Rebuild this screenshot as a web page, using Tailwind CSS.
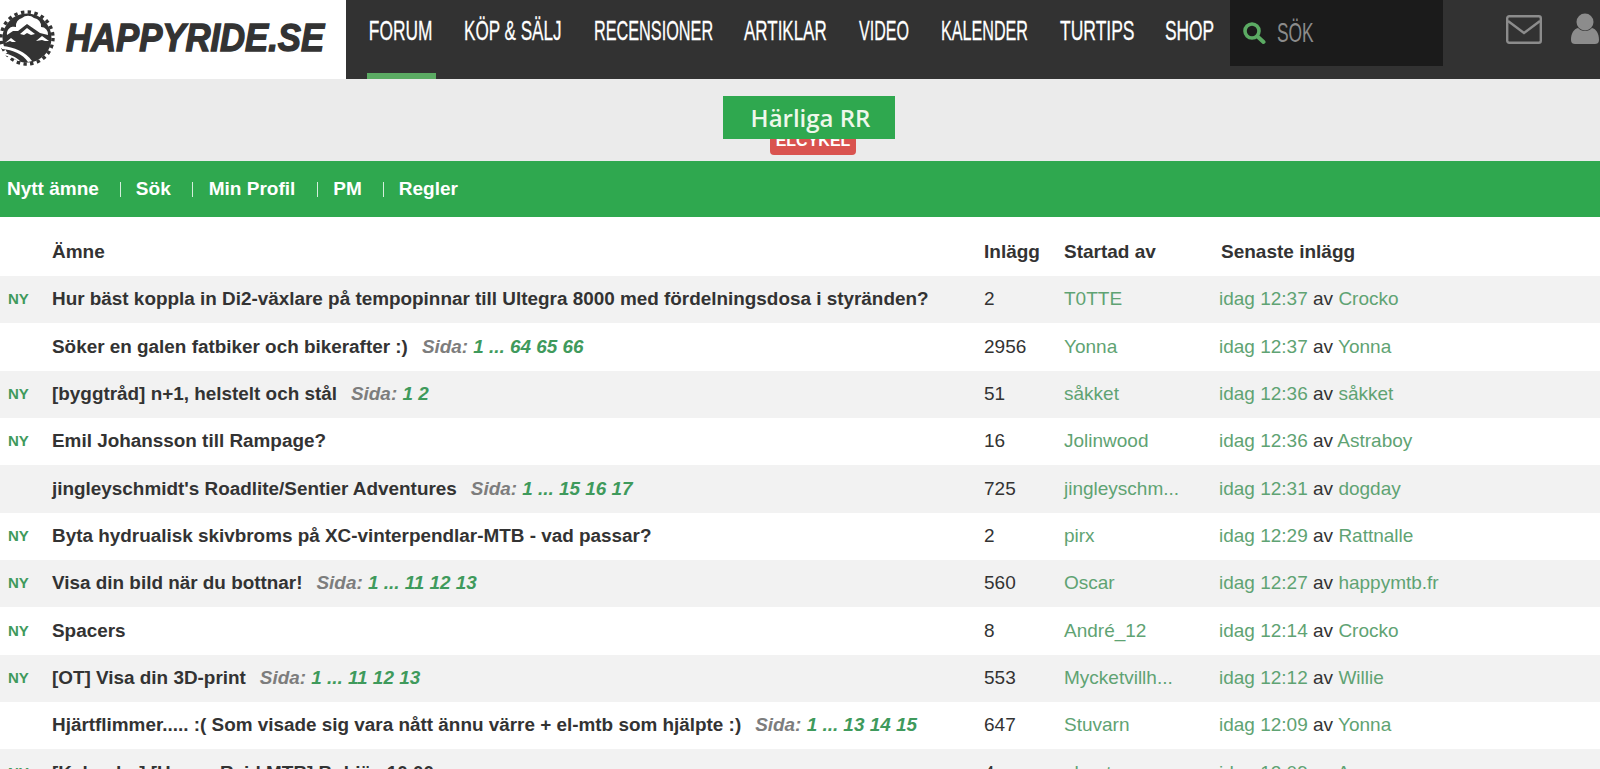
<!DOCTYPE html>
<html lang="sv">
  <head>
    <meta charset="UTF-8" />
    <title>Happyride.se Forum</title>
    <script src="https://cdn.jsdelivr.net/npm/@tailwindcss/browser@4"></script>
  </head>
  <body class="bg-white font-['Liberation_Sans',Arial,sans-serif] text-[#333] overflow-hidden h-[769px]">
    <!-- Header -->
    <header class="flex h-[79px] bg-[#323232]">
      <a href="#" class="flex items-center w-[346px] h-full bg-white pb-[3px] shrink-0">
        <svg class="w-[55px] h-[56px] shrink-0" viewBox="0 0 55 56">
          <circle cx="27" cy="28" r="24.5" fill="#333" />
          <circle cx="27" cy="28" r="26" fill="none" stroke="#333" stroke-width="3.4" stroke-dasharray="3.4 3.4" />
          <path d="M7 25a7 7 0 0 1 9-8 8 8 0 0 1 6-9 9 9 0 0 1 12 0 8 8 0 0 1 7 9 7 7 0 0 1 7 8l-8-2-13-9-9 7-5 0z" fill="#fff" />
          <path d="M20 24l7-6 8 6-4 1-4-2-3 2zM5 33l6-5 5 4-4 0-2-1zM36 31l6-5 7 5-4 0-3-1z" fill="#fff" />
          <path d="M2 36c12 1 24 6 30 15l-4 1C23 44 13 40 2 39zM2 43c8 1 14 4 18 8l-2 0c-4-3-9-5-15-6z" fill="#fff" />
        </svg>
        <span class="ml-[11px] w-[258px] text-[38px] leading-none font-bold italic whitespace-nowrap origin-left scale-x-[.912] [-webkit-text-stroke:1.4px_#333]">HAPPYRIDE.SE</span>
      </a>
      <nav class="flex gap-[32px] h-full text-white text-[28px] leading-[62px] whitespace-nowrap [-webkit-text-stroke:.3px_#fff]">
        <a href="#" class="relative w-[69px] ml-[21px] -mr-[4px] h-full">
          <span class="block pl-[3px] origin-left scale-x-[.62]">FORUM</span>
          <span class="absolute left-0 bottom-0 w-[69px] h-[6px] bg-[#5bab63]"></span>
        </a>
        <a href="#" class="w-[98px]"><span class="block origin-left scale-x-[.61]">KÖP &amp; SÄLJ</span></a>
        <a href="#" class="w-[118px]"><span class="block origin-left scale-x-[.58]">RECENSIONER</span></a>
        <a href="#" class="w-[83px]"><span class="block origin-left scale-x-[.606]">ARTIKLAR</span></a>
        <a href="#" class="w-[50px]"><span class="block origin-left scale-x-[.574]">VIDEO</span></a>
        <a href="#" class="w-[87px]"><span class="block origin-left scale-x-[.576]">KALENDER</span></a>
        <a href="#" class="w-[73px]"><span class="block origin-left scale-x-[.625]">TURTIPS</span></a>
        <a href="#" class="w-[49px]"><span class="block origin-left scale-x-[.62]">SHOP</span></a>
      </nav>
      <div class="flex items-center ml-[16px] w-[213px] h-[66px] bg-[#1b1b1b] shrink-0">
        <svg class="ml-[12px] w-[24px] h-[24px]" viewBox="0 0 24 24" fill="none" stroke="#5bab63">
          <circle cx="10" cy="10" r="7" stroke-width="3.6" />
          <path d="M15.5 15.5l6 5.5" stroke-width="4" stroke-linecap="round" />
        </svg>
        <span class="ml-[11px] text-[28px] text-[#8b8b8b] whitespace-nowrap origin-left scale-x-[.62]">SÖK</span>
      </div>
      <div class="flex items-start flex-1 pl-[63px] pt-[15px]">
        <svg class="w-[36px] h-[29px] shrink-0" viewBox="0 0 36 29" fill="none" stroke="#8c8c8c" stroke-width="2.4">
          <rect x="1.2" y="1.2" width="33.6" height="26.6" rx="2" />
          <path d="M2 6l16 12 16-12" />
        </svg>
        <svg class="ml-[29px] w-[28px] h-[31px] -mt-[2px] shrink-0" viewBox="0 0 28 31" fill="#8c8c8c">
          <circle cx="14" cy="9" r="8.5" />
          <path d="M0 27c0-7 3-11 7-12 2 2 4 3 7 3s5-1 7-3c4 1 7 5 7 12 0 3-2 4-4 4H4c-2 0-4-1-4-4z" />
        </svg>
      </div>
    </header>

    <!-- Title -->
    <div class="relative h-[82px] bg-[#ebebeb]">
      <div class="absolute left-[770px] top-[50px] w-[86px] h-[26px] rounded-b-[4px] bg-[#d9534f] text-white text-[16px] font-bold text-center">ELCYKEL</div>
      <h1 class="absolute left-[723px] top-[17px] w-[172px] h-[43px] pl-[3px] bg-[#2fa84f] text-[#eef7ea] text-center font-['Open_Sans'] text-[24px] font-semibold leading-[43px]">Härliga RR</h1>
    </div>

    <!-- Forum menu -->
    <div class="flex items-center h-[56px] bg-[#2fa84f] text-white text-[19px] font-bold pl-[7px]">
      <a href="#">Nytt ämne</a>
      <span class="w-px h-[15px] bg-white/80 ml-[21px] mr-[15px]"></span>
      <a href="#">Sök</a>
      <span class="w-px h-[15px] bg-white/80 ml-[21px] mr-[16px]"></span>
      <a href="#">Min Profil</a>
      <span class="w-px h-[15px] bg-white/80 ml-[22px] mr-[15px]"></span>
      <a href="#">PM</a>
      <span class="w-px h-[15px] bg-white/80 ml-[21px] mr-[15px]"></span>
      <a href="#">Regler</a>
    </div>

    <!-- Topics -->
    <table class="w-full table-fixed text-[19px] text-[#333]">
      <thead>
        <tr class="h-[59px] text-left">
          <th class="w-[52px]"></th>
          <th class="w-[932px] pt-[12px] font-bold">Ämne</th>
          <th class="w-[80px] pt-[12px] font-bold">Inlägg</th>
          <th class="w-[155px] pt-[12px] font-bold">Startad av</th>
          <th class="pl-[2px] pt-[12px] font-bold">Senaste inlägg</th>
        </tr>
      </thead>
      <tbody id="topics"></tbody>
    </table>

    <script>
      const topics = [
        { ny: true, title: "Hur bäst koppla in Di2-växlare på tempopinnar till Ultegra 8000 med fördelningsdosa i styränden?", pages: "", count: "2", by: "T0TTE", time: "idag 12:37", last: "Crocko" },
        { ny: false, title: "Söker en galen fatbiker och bikerafter :)", pages: "1 ... 64 65 66", count: "2956", by: "Yonna", time: "idag 12:37", last: "Yonna" },
        { ny: true, title: "[byggtråd] n+1, helstelt och stål", pages: "1 2", count: "51", by: "såkket", time: "idag 12:36", last: "såkket" },
        { ny: true, title: "Emil Johansson till Rampage?", pages: "", count: "16", by: "Jolinwood", time: "idag 12:36", last: "Astraboy" },
        { ny: false, title: "jingleyschmidt's Roadlite/Sentier Adventures", pages: "1 ... 15 16 17", count: "725", by: "jingleyschm...", time: "idag 12:31", last: "dogday" },
        { ny: true, title: "Byta hydrualisk skivbroms på XC-vinterpendlar-MTB - vad passar?", pages: "", count: "2", by: "pirx", time: "idag 12:29", last: "Rattnalle" },
        { ny: true, title: "Visa din bild när du bottnar!", pages: "1 ... 11 12 13", count: "560", by: "Oscar", time: "idag 12:27", last: "happymtb.fr" },
        { ny: true, title: "Spacers", pages: "", count: "8", by: "André_12", time: "idag 12:14", last: "Crocko" },
        { ny: true, title: "[OT] Visa din 3D-print", pages: "1 ... 11 12 13", count: "553", by: "Mycketvillh...", time: "idag 12:12", last: "Willie" },
        { ny: false, title: "Hjärtflimmer..... :( Som visade sig vara nått ännu värre + el-mtb som hjälpte :)", pages: "1 ... 13 14 15", count: "647", by: "Stuvarn", time: "idag 12:09", last: "Yonna" },
        { ny: true, title: "[Kalender] [Happy Raid MTB] Bubjäx 10.00", pages: "", count: "4", by: "ahantr", time: "idag 12:09", last: "Anna" },
      ];

      document.getElementById("topics").innerHTML = topics
        .map(
          (t) => `
          <tr class="h-[47.33px] odd:bg-[#f2f2f2] whitespace-nowrap">
            <td class="pl-[8px] text-[15px] font-bold text-[#3f9a5c]">${t.ny ? "NY" : ""}</td>
            <td class="text-[18.9px] font-bold">${t.title}${
              t.pages
                ? `<span class="ml-[14px] italic text-[#7d7d7d]">Sida: <span class="text-[#3f9a5c]">${t.pages}</span></span>`
                : ""
            }</td>
            <td>${t.count}</td>
            <td class="text-[#5fa373]">${t.by}</td>
            <td><span class="text-[#5fa373]">${t.time}</span> av <span class="text-[#5fa373]">${t.last}</span></td>
          </tr>`
        )
        .join("");
    </script>
  </body>
</html>
